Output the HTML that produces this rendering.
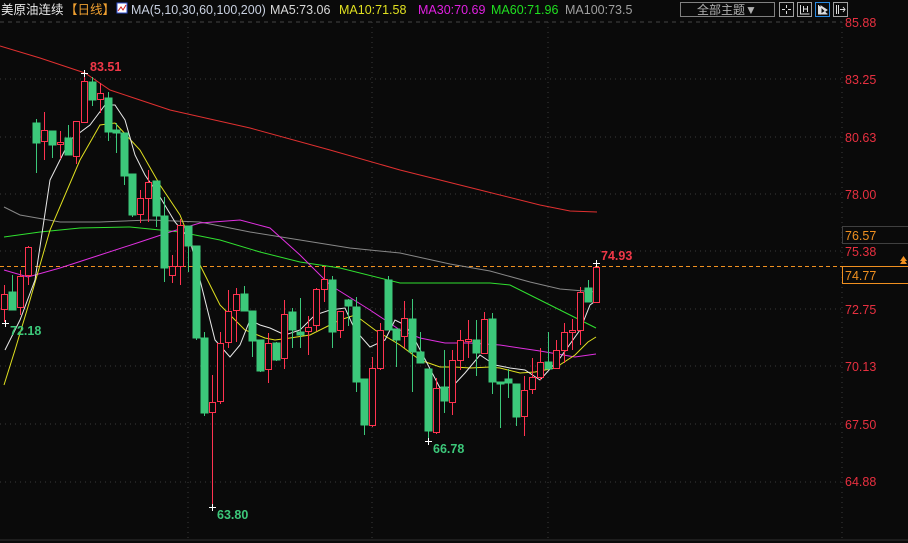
<!DOCTYPE html>
<html><head><meta charset="utf-8"><style>
html,body{margin:0;padding:0;background:#0a0a0a;width:908px;height:543px;overflow:hidden}
svg{display:block}
text{font-family:"Liberation Sans","Noto Sans CJK SC",sans-serif}
</style></head><body>
<svg width="908" height="543" viewBox="0 0 908 543" xmlns="http://www.w3.org/2000/svg">
<rect width="908" height="543" fill="#0a0a0a"/>
<!-- header -->
<text x="1" y="14" font-size="12.5" fill="#e8e8e8">美原油连续</text>
<text x="65" y="14" font-size="12.5" fill="#f0a030">【日线】</text>
<rect x="117" y="3" width="10" height="10" fill="#fff" stroke="#3050d0"/>
<polyline points="118,11 121,7 123,10 126,5" fill="none" stroke="#d02020" stroke-width="1"/>
<text x="131" y="14" font-size="12.5" fill="#c8d0e0">MA(5,10,30,60,100,200)</text>
<text x="270" y="14" font-size="12.5" fill="#d8d8d8">MA5:73.06</text>
<text x="339" y="14" font-size="12.5" fill="#e0e020">MA10:71.58</text>
<text x="418" y="14" font-size="12.5" fill="#e020e0">MA30:70.69</text>
<text x="491" y="14" font-size="12.5" fill="#20e020">MA60:71.96</text>
<text x="565" y="14" font-size="12.5" fill="#a0a0a0">MA100:73.5</text>
<rect x="680.5" y="2.5" width="94" height="14" fill="none" stroke="#808080"/>
<text x="697" y="14" font-size="12" fill="#b0b0b0">全部主题▼</text>
<rect x="779.5" y="2.5" width="14" height="14" fill="none" stroke="#a0a0a0"/>
<path d="M786.5 5v3M786.5 11v3M782 9.5h3M788 9.5h3" stroke="#ddd"/>
<rect x="797.5" y="2.5" width="14" height="14" fill="none" stroke="#a0a0a0"/>
<path d="M800.5 5v9h9M803.5 6v6M807.5 6v6M803 9h5" stroke="#ddd" fill="none"/>
<rect x="815.5" y="2.5" width="14" height="14" fill="none" stroke="#2a8ae0"/>
<path d="M818.5 5v9h9M821 6l6 4-6 4z" stroke="#ddd" fill="#ddd"/>
<rect x="833.5" y="2.5" width="14" height="14" fill="none" stroke="#a0a0a0"/>
<path d="M836.5 5v9M838.5 5v9M840 9.5h5M843 7l2 2.5-2 2.5" stroke="#ddd" fill="none"/>
<line x1="0" y1="22" x2="842" y2="22" stroke="#444" stroke-dasharray="4,4"/>
<!-- grid -->
<g stroke="#3a3a3a" stroke-dasharray="1,4">
<line x1="0" y1="79" x2="842" y2="79"/><line x1="0" y1="137" x2="842" y2="137"/>
<line x1="0" y1="194" x2="842" y2="194"/><line x1="0" y1="251" x2="842" y2="251"/>
<line x1="0" y1="309" x2="842" y2="309"/><line x1="0" y1="366" x2="842" y2="366"/>
<line x1="0" y1="424" x2="842" y2="424"/><line x1="0" y1="482" x2="842" y2="482"/>
<line x1="188" y1="22" x2="188" y2="540"/><line x1="372" y1="22" x2="372" y2="540"/>
<line x1="548" y1="22" x2="548" y2="540"/>
<line x1="842" y1="22" x2="842" y2="540"/>
</g>
<line x1="0" y1="540" x2="908" y2="540" stroke="#303030"/>
<!-- orange dashed -->
<line x1="0" y1="266.5" x2="842" y2="266.5" stroke="#f09020" stroke-dasharray="4,3"/>
<!-- MA lines -->
<g fill="none" stroke-width="1">
<polyline stroke="#e03030" points="0,46 40,58 85,73 110,90 170,110 250,128 330,150 400,170 480,190 540,205 570,211 597,212"/>
<polyline stroke="#888" points="4,207 20,215 60,222 100,222 150,220 200,222 250,232 300,240 350,248 400,253 450,264 490,271 530,282 560,289 596,292"/>
<polyline stroke="#30e030" points="4,237 40,232 80,228 130,227 180,232 220,240 260,252 300,262 340,268 400,283 460,283 490,283 510,285 540,300 570,315 596,328"/>
<polyline stroke="#e030e0" points="4,270 28,277 60,268 100,255 140,242 170,232 200,223 240,220 270,228 300,255 330,285 370,310 400,330 420,338 445,343 470,343 500,345 540,351 575,357 596,354"/>
<polyline stroke="#e0e020" points="4,385 15,350 30,300 50,230 80,160 100,125 115,123 140,150 160,185 180,215 200,265 220,305 245,330 265,338 275,340 290,338 310,335 340,320 355,315 375,330 400,345 420,360 440,367 455,367 470,368 490,367 500,368 520,373 535,372 555,368 575,355 588,342 596,337"/>
<polyline stroke="#e8e8e8" points="5,350 20,320 35,280 50,180 70,140 90,125 105,105 115,105 125,120 135,155 145,175 160,197 175,222 190,240 200,280 215,340 230,357 240,345 250,320 260,325 270,328 285,335 300,330 315,315 330,310 345,308 355,330 370,347 385,340 395,320 405,325 415,340 440,388 452,387 465,373 480,355 495,365 510,368 525,370 540,380 560,358 580,330 590,305 597,300"/>
</g>
<!-- candles -->
<g stroke-width="1">
<g stroke="#ff3350" fill="#0a0a0a">
<line x1="4.5" y1="285" x2="4.5" y2="322"/><rect x="1.5" y="294.5" width="6" height="15"/>
<line x1="20.5" y1="270" x2="20.5" y2="315"/><rect x="17.5" y="276.5" width="6" height="31"/>
<line x1="28.5" y1="246" x2="28.5" y2="285"/><rect x="25.5" y="247.5" width="6" height="28"/>
<line x1="44.5" y1="112" x2="44.5" y2="160"/><rect x="41.5" y="130.5" width="6" height="11"/>
<line x1="60.5" y1="131" x2="60.5" y2="159"/><rect x="57.5" y="142.5" width="6" height="2"/>
<line x1="76.5" y1="121" x2="76.5" y2="164"/><rect x="73.5" y="121.5" width="6" height="35"/>
<line x1="84.5" y1="73" x2="84.5" y2="122"/><rect x="81.5" y="81.5" width="6" height="41"/>
<line x1="100.5" y1="83" x2="100.5" y2="113"/><rect x="97.5" y="93.5" width="6" height="6"/>
<line x1="140.5" y1="190" x2="140.5" y2="223"/><rect x="137.5" y="198.5" width="6" height="16"/>
<line x1="148.5" y1="170" x2="148.5" y2="222"/><rect x="145.5" y="182.5" width="6" height="16"/>
<line x1="172.5" y1="255" x2="172.5" y2="283"/><rect x="169.5" y="266.5" width="6" height="9"/>
<line x1="180.5" y1="219" x2="180.5" y2="285"/><rect x="177.5" y="225.5" width="6" height="41"/>
<line x1="212.5" y1="375" x2="212.5" y2="508"/><rect x="209.5" y="402.5" width="6" height="10"/>
<line x1="220.5" y1="332" x2="220.5" y2="404"/><rect x="217.5" y="343.5" width="6" height="58"/>
<line x1="228.5" y1="290" x2="228.5" y2="348"/><rect x="225.5" y="311.5" width="6" height="31"/>
<line x1="236.5" y1="288" x2="236.5" y2="342"/><rect x="233.5" y="294.5" width="6" height="16"/>
<line x1="268.5" y1="333" x2="268.5" y2="383"/><rect x="265.5" y="343.5" width="6" height="26"/>
<line x1="284.5" y1="300" x2="284.5" y2="369"/><rect x="281.5" y="314.5" width="6" height="44"/>
<line x1="308.5" y1="316" x2="308.5" y2="355"/><rect x="305.5" y="327.5" width="6" height="4"/>
<line x1="316.5" y1="288" x2="316.5" y2="331"/><rect x="313.5" y="289.5" width="6" height="36"/>
<line x1="324.5" y1="266" x2="324.5" y2="302"/><rect x="321.5" y="279.5" width="6" height="10"/>
<line x1="340.5" y1="311" x2="340.5" y2="338"/><rect x="337.5" y="311.5" width="6" height="19"/>
<line x1="372.5" y1="357" x2="372.5" y2="427"/><rect x="369.5" y="368.5" width="6" height="57"/>
<line x1="380.5" y1="323" x2="380.5" y2="370"/><rect x="377.5" y="330.5" width="6" height="38"/>
<line x1="404.5" y1="301" x2="404.5" y2="348"/><rect x="401.5" y="318.5" width="6" height="18"/>
<line x1="436.5" y1="378" x2="436.5" y2="434"/><rect x="433.5" y="388.5" width="6" height="44"/>
<line x1="452.5" y1="350" x2="452.5" y2="415"/><rect x="449.5" y="360.5" width="6" height="42"/>
<line x1="460.5" y1="330" x2="460.5" y2="370"/><rect x="457.5" y="340.5" width="6" height="20"/>
<line x1="468.5" y1="320" x2="468.5" y2="358"/><rect x="465.5" y="339.5" width="6" height="2"/>
<line x1="484.5" y1="312" x2="484.5" y2="353"/><rect x="481.5" y="319.5" width="6" height="34"/>
<line x1="524.5" y1="376" x2="524.5" y2="436"/><rect x="521.5" y="390.5" width="6" height="26"/>
<line x1="532.5" y1="358" x2="532.5" y2="394"/><rect x="529.5" y="377.5" width="6" height="12"/>
<line x1="540.5" y1="348" x2="540.5" y2="380"/><rect x="537.5" y="362.5" width="6" height="15"/>
<line x1="556.5" y1="340" x2="556.5" y2="368"/><rect x="553.5" y="350.5" width="6" height="18"/>
<line x1="564.5" y1="323" x2="564.5" y2="363"/><rect x="561.5" y="332.5" width="6" height="18"/>
<line x1="572.5" y1="319" x2="572.5" y2="350"/><rect x="569.5" y="330.5" width="6" height="2"/>
<line x1="580.5" y1="287" x2="580.5" y2="345"/><rect x="577.5" y="292.5" width="6" height="38"/>
<line x1="596.5" y1="263" x2="596.5" y2="302"/><rect x="593.5" y="267.5" width="6" height="35"/>
</g>
<g stroke="#3cc87a" fill="#3cc87a">
<line x1="12.5" y1="275" x2="12.5" y2="310"/><rect x="9" y="292" width="7" height="18"/>
<line x1="36.5" y1="119" x2="36.5" y2="173"/><rect x="33" y="123" width="7" height="20"/>
<line x1="52.5" y1="131" x2="52.5" y2="158"/><rect x="49" y="131" width="7" height="14"/>
<line x1="68.5" y1="125" x2="68.5" y2="155"/><rect x="65" y="138" width="7" height="17"/>
<line x1="92.5" y1="77" x2="92.5" y2="106"/><rect x="89" y="82" width="7" height="18"/>
<line x1="108.5" y1="92" x2="108.5" y2="141"/><rect x="105" y="98" width="7" height="34"/>
<line x1="116.5" y1="123" x2="116.5" y2="153"/><rect x="113" y="130" width="7" height="3"/>
<line x1="124.5" y1="133" x2="124.5" y2="185"/><rect x="121" y="133" width="7" height="43"/>
<line x1="132.5" y1="174" x2="132.5" y2="217"/><rect x="129" y="174" width="7" height="41"/>
<line x1="156.5" y1="181" x2="156.5" y2="227"/><rect x="153" y="181" width="7" height="35"/>
<line x1="164.5" y1="197" x2="164.5" y2="282"/><rect x="161" y="216" width="7" height="52"/>
<line x1="188.5" y1="226" x2="188.5" y2="272"/><rect x="185" y="226" width="7" height="20"/>
<line x1="196.5" y1="246" x2="196.5" y2="340"/><rect x="193" y="246" width="7" height="92"/>
<line x1="204.5" y1="332" x2="204.5" y2="416"/><rect x="201" y="338" width="7" height="75"/>
<line x1="244.5" y1="286" x2="244.5" y2="311"/><rect x="241" y="294" width="7" height="17"/>
<line x1="252.5" y1="311" x2="252.5" y2="357"/><rect x="249" y="311" width="7" height="30"/>
<line x1="260.5" y1="340" x2="260.5" y2="372"/><rect x="257" y="340" width="7" height="31"/>
<line x1="276.5" y1="342" x2="276.5" y2="361"/><rect x="273" y="343" width="7" height="17"/>
<line x1="292.5" y1="308" x2="292.5" y2="348"/><rect x="289" y="312" width="7" height="18"/>
<line x1="300.5" y1="298" x2="300.5" y2="348"/><rect x="297" y="332" width="7" height="3"/>
<line x1="332.5" y1="276" x2="332.5" y2="348"/><rect x="329" y="280" width="7" height="52"/>
<line x1="348.5" y1="299" x2="348.5" y2="326"/><rect x="345" y="300" width="7" height="6"/>
<line x1="356.5" y1="297" x2="356.5" y2="392"/><rect x="353" y="307" width="7" height="75"/>
<line x1="364.5" y1="379" x2="364.5" y2="435"/><rect x="361" y="379" width="7" height="46"/>
<line x1="388.5" y1="276" x2="388.5" y2="330"/><rect x="385" y="280" width="7" height="50"/>
<line x1="396.5" y1="329" x2="396.5" y2="367"/><rect x="393" y="329" width="7" height="11"/>
<line x1="412.5" y1="299" x2="412.5" y2="392"/><rect x="409" y="319" width="7" height="33"/>
<line x1="420.5" y1="332" x2="420.5" y2="363"/><rect x="417" y="352" width="7" height="11"/>
<line x1="428.5" y1="369" x2="428.5" y2="441"/><rect x="425" y="369" width="7" height="62"/>
<line x1="444.5" y1="350" x2="444.5" y2="413"/><rect x="441" y="387" width="7" height="14"/>
<line x1="476.5" y1="320" x2="476.5" y2="376"/><rect x="473" y="340" width="7" height="13"/>
<line x1="492.5" y1="313" x2="492.5" y2="394"/><rect x="489" y="319" width="7" height="63"/>
<line x1="500.5" y1="382" x2="500.5" y2="428"/><rect x="497" y="382" width="7" height="2"/>
<line x1="508.5" y1="369" x2="508.5" y2="398"/><rect x="505" y="379" width="7" height="4"/>
<line x1="516.5" y1="384" x2="516.5" y2="426"/><rect x="513" y="384" width="7" height="33"/>
<line x1="548.5" y1="332" x2="548.5" y2="369"/><rect x="545" y="362" width="7" height="7"/>
<line x1="588.5" y1="280" x2="588.5" y2="302"/><rect x="585" y="288" width="7" height="14"/>
</g>
</g>
<!-- extreme markers -->
<g stroke="#fff" stroke-width="1">
<path d="M81 73.5h7M84.5 70v7"/>
<path d="M2 323.5h7M5.5 320v7"/>
<path d="M209 507.5h7M212.5 504v7"/>
<path d="M425 441.5h7M428.5 438v7"/>
<path d="M593 263.5h7M596.5 260v7"/>
</g>
<g font-size="12.5" font-weight="bold">
<text x="90" y="71" fill="#f03848">83.51</text>
<text x="10" y="335" fill="#3cc87a">72.18</text>
<text x="217" y="519" fill="#3cc87a">63.80</text>
<text x="433" y="453" fill="#3cc87a">66.78</text>
<text x="601" y="260" fill="#f03848">74.93</text>
</g>
<!-- right axis -->
<g font-size="12.5" fill="#e83040">
<text x="845" y="27">85.88</text>
<text x="845" y="84">83.25</text>
<text x="845" y="142">80.63</text>
<text x="845" y="199">78.00</text>
<text x="845" y="256">75.38</text>
<text x="845" y="314">72.75</text>
<text x="845" y="371">70.13</text>
<text x="845" y="429">67.50</text>
<text x="845" y="486">64.88</text>
</g>
<rect x="842.5" y="226.5" width="70" height="17" fill="#0a0a0a" stroke="#404040"/>
<text x="845" y="240" font-size="12.5" fill="#f09020">76.57</text>
<rect x="842.5" y="266.5" width="70" height="17" fill="#0a0a0a" stroke="#f09020"/>
<text x="845" y="280" font-size="12.5" fill="#f09020">74.77</text>
<path d="M900 264l3.5-5 3.5 5zM900 261l3.5-5 3.5 5z" fill="#f09020"/>
</svg>
</body></html>
